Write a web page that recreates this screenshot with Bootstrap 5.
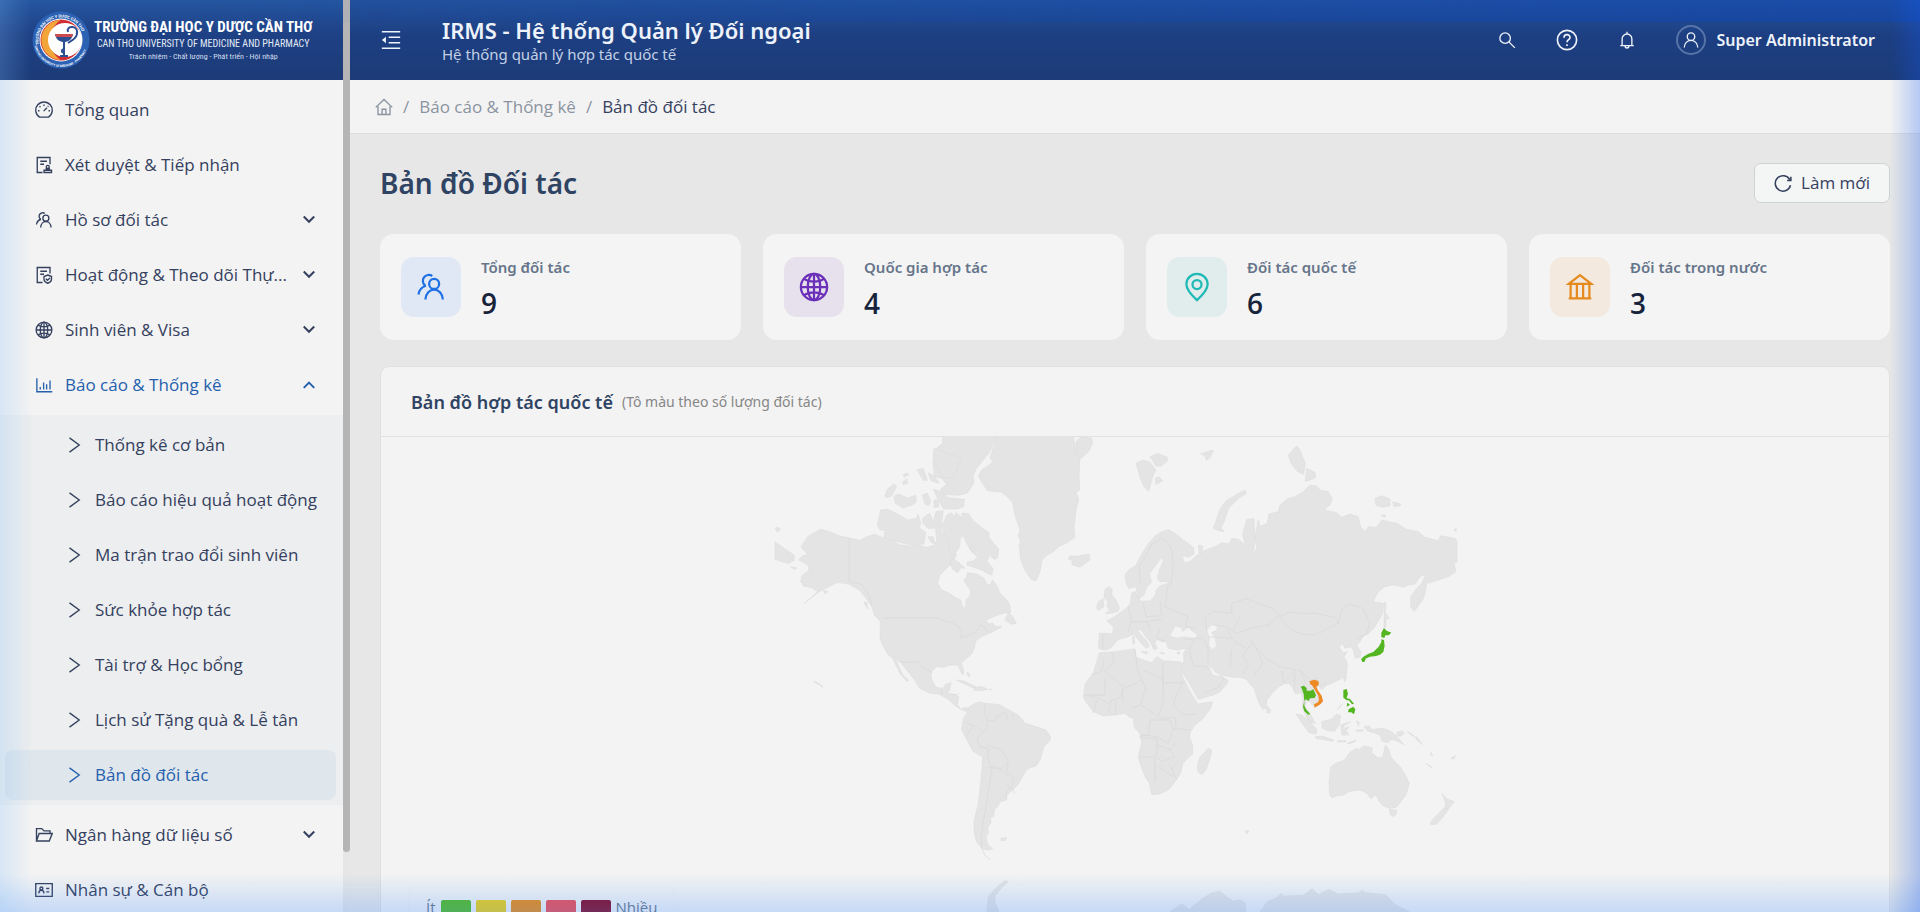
<!DOCTYPE html>
<html lang="vi">
<head>
<meta charset="utf-8">
<meta name="viewport" content="width=device-width, initial-scale=1">
<title>IRMS - Bản đồ Đối tác</title>
<link href="https://cdn.jsdelivr.net/npm/bootstrap@5.3.0/dist/css/bootstrap.min.css" rel="stylesheet">
<style>
:root{--ink:#34405e;--accent:#2560ad;--surface:#f3f3f3}
body{font-family:"Open Sans","Noto Sans",sans-serif;font-size:17px;color:var(--ink);background:#e7e7e7;overflow:hidden}
a{color:inherit;text-decoration:none}
svg.ico{width:18px;height:18px;fill:none;stroke:currentColor;stroke-width:1.8;flex:none}
svg.ico.lg{width:22px;height:22px}
/* sidebar */
.side{width:350px;flex:none;background:var(--surface)}
.brandbar{height:80px;background:linear-gradient(#2556a0,#1e4084 45%,#1c3b77);padding-left:32px}
.brandbar .seal{width:58px;height:58px}
.brand-vi,.brand-en,.brand-motto{font-family:"Roboto Condensed","Liberation Sans Narrow","Roboto",sans-serif}
.brand-vi{font-size:15px;line-height:20px;font-weight:700}
.brand-en{font-size:10px;line-height:14px;color:#e3eaf6}
.brand-motto{font-size:8px;line-height:12px;color:#d3def0}
.side-body{width:343px}
.menu{gap:5px;padding-top:5px}
.menu a{height:50px;padding:0 27px 0 35px;gap:12px}
.menu .chev{width:14px;height:14px;stroke-width:3.4}
.menu .on{color:var(--accent)}
.submenu{background:#eceeef;padding:5px 7px 5px 5px;gap:5px}
.submenu a{padding:0 12px 0 60px;border-radius:8px;gap:12px}
.submenu a.on{background:#dfe6ec}
.track{width:7px;background:#e6e6e6}
.thumb{height:852px;background:#b5b5b5;border-radius:0 0 4px 4px}
/* top bar */
.topbar{height:80px;background:linear-gradient(#24529c,#1d3f82 45%,#1c3b77);color:#eef3fb;padding:0 45px 0 30px;gap:40px}
.topbar button{background:none;border:0;color:inherit;padding:0;display:flex}
.topbar-tools{gap:40px}
.topbar,h1,.stat-label,.map-head{font-family:"Noto Sans","Open Sans",sans-serif}
.app-name{font-size:22px;line-height:28px;font-weight:600}
.app-sub{font-size:15px;line-height:20px;color:#c3d0e6}
.user-link{font-size:16px;font-weight:600;gap:10px}
.avatar-ring{width:30px;height:30px;border:2px solid #5674a8;border-radius:50%}
.crumbs{height:54px;background:var(--surface);border-bottom:1px solid #dedede;padding-left:25px;gap:10px;color:#8b93a1}
.crumbs .here{color:var(--ink)}
.page{padding:29px 30px 0 30px}
h1{font-size:28px;line-height:40px;font-weight:600;color:#2f4363}
.btn-reload{height:40px;background:#f4f5f5;border:1px solid #cfd2d5;border-radius:7px;padding:0 19px;gap:9px;color:var(--ink);font-size:17px}
.stats{gap:22px;margin-top:31px}
.stat{height:106px;border-radius:14px;background:#f4f4f4;padding:23px 21px;gap:20px;flex:1 1 0}
.tile{width:60px;height:60px;border-radius:13px;display:flex;align-items:center;justify-content:center}
.tile svg.ico{width:30px;height:30px}
.tile-blue{background:#dfe8f4;color:#1f70e4}
.tile-violet{background:#e6e1ed;color:#6b2fb8}
.tile-teal{background:#e0edec;color:#1fb9b6}
.tile-amber{background:#f3e9df;color:#e58a1f}
.stat-label{font-size:15px;line-height:20px;font-weight:600;color:#66758a}
.stat-num{font-size:28px;line-height:40px;font-weight:600;color:#16233b;margin-top:6px}
.map-card{margin-top:26px;background:var(--surface);border:1px solid #e0e0e0;border-radius:9px}
.map-head{height:70px;border-bottom:1px solid #e2e2e2;padding:0 30px;gap:9px}
.map-head h2{font-size:18px;line-height:24px;font-weight:600;color:#2f4363}
.map-head span{font-size:14px;color:#868686}
.map-area{height:520px}
.land{fill:#e4e4e4;stroke:#dbdbdb;stroke-width:1.5;stroke-linejoin:round}
.seas{fill:#f3f3f3;stroke:#dcdcdc;stroke-width:1.5}
.borders{fill:none;stroke:#d8d8d8;stroke-width:2}
.legend-box{left:27px;bottom:30px;height:40px;padding:0 17px;gap:5px;border:1px solid #f0f0f0;border-radius:6px;font-size:15px;color:#66758a}
.swatch{width:30px;height:14px;border-radius:2px}
.sw-1{background:#53bb1f}.sw-2{background:#eecf13}.sw-3{background:#ed8a10}.sw-4{background:#f04c50}.sw-5{background:#850820}
/* soft blue frame round the window */
.glow{inset:0;z-index:10;pointer-events:none;background:
linear-gradient(to right,rgba(130,190,250,.24),rgba(130,190,250,0) 32px),
linear-gradient(to left,rgba(20,90,245,.28),rgba(20,90,245,0) 30px),
linear-gradient(to top,rgba(70,145,255,.26),rgba(70,145,255,0) 38px),
linear-gradient(to left,rgba(10,70,190,.4),rgba(10,70,190,0) 90%) top/100% 22px no-repeat}
</style>
</head>
<body>
<svg class="d-none">
<symbol id="i-dash" viewBox="0 0 24 24"><path d="M6 21.5a11 11 0 1 1 12 0z"/><path d="M11.500 13.500 16 9M4 13h2M18 13h2M12 4.500v2M6 7l1.300 1.300M17.800 6.800l-.8.800"/></symbol>
<symbol id="i-audit" viewBox="0 0 24 24"><path d="M10 22H3V2h17v9M7 7h9M7 11h5M12 22h10v-3H12zM15 19v-2h4v2"/><circle cx="17" cy="14.500" r="2"/></symbol>
<symbol id="i-team" viewBox="0 0 24 24"><circle cx="14.500" cy="9.500" r="4"/><path d="M7.500 22c.3-5 3.500-8 7-8s6.700 3 7 8M13 3.200A4.500 4.500 0 1 0 7.500 11M8 11c-3.500 1-5.500 3.500-6 7"/></symbol>
<symbol id="i-shield" viewBox="0 0 24 24"><path d="M10 22H3V2h17v8M7 7h9M7 11h5M17 12l5 2v4c0 2.500-2.500 4-5 5-2.500-1-5-2.500-5-5v-4zM14.500 17l2 2 3.500-3"/></symbol>
<symbol id="i-globe" viewBox="0 0 24 24"><circle cx="12" cy="12" r="10.500"/><ellipse cx="12" cy="12" rx="5" ry="10.500"/><path d="M12 1.500v21M1.500 12h21M4 5.500c4.500 3 11.500 3 16 0M4 18.500c4.500-3 11.500-3 16 0"/></symbol>
<symbol id="i-chart" viewBox="0 0 24 24"><path d="M2.500 3v18H23M7 14.500V18M11.500 8.500V18M15.500 11v7M20 6v12"/></symbol>
<symbol id="i-folder" viewBox="0 0 24 24"><path d="M2 20V3.500h7l3 3h8V10M2 20 5.500 10H23l-4 10z"/></symbol>
<symbol id="i-id" viewBox="0 0 24 24"><path d="M1 3.500h22v17H1zM5 16.500c.3-5.500 6.700-5.500 7 0M15 10h4M15 14.500h4"/><circle cx="8.500" cy="10" r="2"/></symbol>
<symbol id="i-down" viewBox="0 0 24 24"><path d="m3 6 9 9 9-9"/></symbol>
<symbol id="i-up" viewBox="0 0 24 24"><path d="m3 17 9-9 9 9"/></symbol>
<symbol id="i-right" viewBox="0 0 24 24"><path d="M6 2.500 19 12 6 21.500"/></symbol>
<symbol id="i-user" viewBox="0 0 24 24"><circle cx="12" cy="7.500" r="5"/><path d="M3 22c.5-6 4.500-9.500 9-9.500s8.500 3.500 9 9.500"/></symbol>
</svg>

<div class="d-flex vh-100">
<aside class="side d-flex">
 <div class="side-body">
  <div class="brandbar d-flex align-items-center gap-1 text-white">
   <svg class="seal flex-shrink-0" viewBox="0 0 58 58">
    <defs><path id="arcTop" d="M7 33.700A22.500 22.500 0 1 1 51 33.700"/><path id="arcBot" d="M2.700 35A27 27 0 0 0 55.300 35"/></defs>
    <circle cx="29" cy="29" r="28.500" fill="#2c62b4"/>
    <circle cx="29" cy="29" r="21.500" fill="#fff"/>
    <circle cx="29" cy="29" r="20.500" fill="#cf2f35"/>
    <path d="M25 10.500a19 19 0 0 0 0 37 25 25 0 0 1 0-37z" fill="#f2a63a" stroke="#f2a63a" stroke-width="2"/>
    <circle cx="33" cy="29" r="17" fill="#fff"/>
    <path d="M23 23h18c-1 6-5 8-9 8s-8-2-9-8z" fill="#2c4f93"/><path d="M23 23h18l-1 3H24z" fill="#cb4a4f"/>
    <path d="M32 31v13M28 45h8M32 38c-3 1-3 3 0 4M36 21c-2-6 8-7 9-1 1 6-4 9-9 12" fill="none" stroke="#2c4f93" stroke-width="2"/>
    <g fill="#fff" font-family="Roboto,sans-serif" font-weight="700"><text font-size="4"><textPath href="#arcTop">TRƯỜNG ĐẠI HỌC Y DƯỢC CẦN THƠ</textPath></text>
    <text font-size="3"><textPath href="#arcBot">CANTHO UNIVERSITY OF MEDICINE - PHARMACY</textPath></text></g>
   </svg>
   <div class="text-center text-nowrap">
    <div class="brand-vi">TRƯỜNG ĐẠI HỌC Y DƯỢC CẦN THƠ</div>
    <div class="brand-en">CAN THO UNIVERSITY OF MEDICINE AND PHARMACY</div>
    <div class="brand-motto">Trách nhiệm - Chất lượng - Phát triển - Hội nhập</div>
   </div>
  </div>
  <nav class="menu d-flex flex-column">
   <a href="#" class="d-flex align-items-center"><svg class="ico"><use href="#i-dash"/></svg><span>Tổng quan</span></a>
   <a href="#" class="d-flex align-items-center"><svg class="ico"><use href="#i-audit"/></svg><span>Xét duyệt &amp; Tiếp nhận</span></a>
   <a href="#" class="d-flex align-items-center"><svg class="ico"><use href="#i-team"/></svg><span class="flex-fill">Hồ sơ đối tác</span><svg class="ico chev"><use href="#i-down"/></svg></a>
   <a href="#" class="d-flex align-items-center"><svg class="ico"><use href="#i-shield"/></svg><span class="flex-fill text-nowrap">Hoạt động &amp; Theo dõi Thự...</span><svg class="ico chev"><use href="#i-down"/></svg></a>
   <a href="#" class="d-flex align-items-center"><svg class="ico"><use href="#i-globe"/></svg><span class="flex-fill">Sinh viên &amp; Visa</span><svg class="ico chev"><use href="#i-down"/></svg></a>
   <a href="#" class="d-flex align-items-center on"><svg class="ico"><use href="#i-chart"/></svg><span class="flex-fill">Báo cáo &amp; Thống kê</span><svg class="ico chev"><use href="#i-up"/></svg></a>
   <div class="submenu d-flex flex-column">
    <a href="#" class="d-flex align-items-center"><svg class="ico"><use href="#i-right"/></svg><span>Thống kê cơ bản</span></a>
    <a href="#" class="d-flex align-items-center"><svg class="ico"><use href="#i-right"/></svg><span class="text-nowrap">Báo cáo hiệu quả hoạt động</span></a>
    <a href="#" class="d-flex align-items-center"><svg class="ico"><use href="#i-right"/></svg><span>Ma trận trao đổi sinh viên</span></a>
    <a href="#" class="d-flex align-items-center"><svg class="ico"><use href="#i-right"/></svg><span>Sức khỏe hợp tác</span></a>
    <a href="#" class="d-flex align-items-center"><svg class="ico"><use href="#i-right"/></svg><span>Tài trợ &amp; Học bổng</span></a>
    <a href="#" class="d-flex align-items-center"><svg class="ico"><use href="#i-right"/></svg><span>Lịch sử Tặng quà &amp; Lễ tân</span></a>
    <a href="#" class="d-flex align-items-center on" aria-current="page"><svg class="ico"><use href="#i-right"/></svg><span>Bản đồ đối tác</span></a>
   </div>
   <a href="#" class="d-flex align-items-center"><svg class="ico"><use href="#i-folder"/></svg><span class="flex-fill">Ngân hàng dữ liệu số</span><svg class="ico chev"><use href="#i-down"/></svg></a>
   <a href="#" class="d-flex align-items-center"><svg class="ico"><use href="#i-id"/></svg><span>Nhân sự &amp; Cán bộ</span></a>
  </nav>
 </div>
 <div class="track"><div class="thumb"></div></div>
</aside>

<div class="flex-fill overflow-hidden">
 <header class="topbar d-flex align-items-center">
  <button type="button" aria-label="Thu gọn menu"><svg class="ico lg" viewBox="0 0 24 24"><path d="M2 3h20M9.500 9h12.500M9.500 15h12.500M2 21h20" stroke-width="1.900"/><path d="M2 12l4.500-3.500v7z" fill="currentColor" stroke="none"/></svg></button>
  <div class="flex-fill"><div class="app-name">IRMS - Hệ thống Quản lý Đối ngoại</div><div class="app-sub">Hệ thống quản lý hợp tác quốc tế</div></div>
  <div class="topbar-tools d-flex align-items-center">
   <button type="button" aria-label="Tìm kiếm"><svg class="ico" viewBox="0 0 24 24"><circle cx="9.500" cy="9.500" r="7"/><path d="m14.500 14.500 8 8"/></svg></button>
   <button type="button" aria-label="Trợ giúp"><svg class="ico lg" viewBox="0 0 24 24"><circle cx="12" cy="12" r="10.500"/><path d="M8.700 9.500c0-4.500 6.600-4.500 6.600-.3 0 2.500-3.300 2.500-3.300 5.300M12 16.500v2"/></svg></button>
   <button type="button" aria-label="Thông báo"><svg class="ico" viewBox="0 0 24 24"><path d="M5.500 19.500V10.500a6.500 6.500 0 0 1 13 0v9M3 19.500h18M12 1v3M9.500 20c0 3.500 5 3.500 5 0"/></svg></button>
   <a href="#" class="user-link d-flex align-items-center text-nowrap"><span class="avatar-ring d-flex align-items-center justify-content-center"><svg class="ico"><use href="#i-user"/></svg></span><span>Super Administrator</span></a>
  </div>
 </header>
 <nav class="crumbs d-flex align-items-center">
  <a href="#" aria-label="Trang chủ" class="d-flex"><svg class="ico" viewBox="0 0 24 24"><path d="M1 12.500 12 2l11 10.500M4 11v11h16V11M9.500 22v-7h5v7"/></svg></a><span>/</span><a href="#">Báo cáo &amp; Thống kê</a><span>/</span><span class="here">Bản đồ đối tác</span>
 </nav>
 <main class="page">
  <div class="d-flex justify-content-between align-items-center">
   <h1 class="m-0">Bản đồ Đối tác</h1>
   <button type="button" class="btn btn-reload d-flex align-items-center"><svg class="ico" viewBox="0 0 24 24"><path d="M21 7.500A10.300 10.300 0 1 0 22 15M22.500 3.500v5h-5" stroke-width="2"/></svg>Làm mới</button>
  </div>
  <section class="stats d-flex">
   <div class="stat d-flex"><div class="tile tile-blue"><svg class="ico"><use href="#i-team"/></svg></div><div><div class="stat-label">Tổng đối tác</div><div class="stat-num">9</div></div></div>
   <div class="stat d-flex"><div class="tile tile-violet"><svg class="ico"><use href="#i-globe"/></svg></div><div><div class="stat-label">Quốc gia hợp tác</div><div class="stat-num">4</div></div></div>
   <div class="stat d-flex"><div class="tile tile-teal"><svg class="ico" viewBox="0 0 24 24"><path d="M12 22.500C6.500 17.500 3.500 13.500 3.500 9.800a8.500 8.300 0 0 1 17 0C20.500 13.500 17.500 17.500 12 22.500z"/><circle cx="12" cy="10" r="3.600"/></svg></div><div><div class="stat-label">Đối tác quốc tế</div><div class="stat-num">6</div></div></div>
   <div class="stat d-flex"><div class="tile tile-amber"><svg class="ico" viewBox="0 0 24 24"><path d="M3 9.500h18L12 2.500zM3 21h18M4.500 9.500V21M9.500 9.500V21M14.500 9.500V21M19.500 9.500V21"/></svg></div><div><div class="stat-label">Đối tác trong nước</div><div class="stat-num">3</div></div></div>
  </section>
  <section class="map-card">
   <div class="map-head d-flex align-items-center"><h2 class="m-0">Bản đồ hợp tác quốc tế</h2><span>(Tô màu theo số lượng đối tác)</span></div>
   <div class="map-area position-relative overflow-hidden">
    <svg class="w-100 h-100 d-block" viewBox="0 0 1508 520" role="img" aria-label="Bản đồ thế giới">
     <g transform="translate(379 -7) scale(.33333)">
      <!-- Americas, Greenland, Iceland -->
      <g class="land">
       <path d="M182 297l28 9 30 12 28 6 32 7 20-11 25-7 20 9 30 8 25 15 30 3 25-3 25 7 25-7 5-15-3-30-7-25 8-30 22-3-5 33 0 30 15 15 10 25 8 15 12 15-15 25-20 20-15 15-7 25 12 20 20 8 25 17 12 5 6 20 8 5 2-25 12-12 2-18-12-15-8-15 8-10 2-12 28 4 22 13 8 17 10 3 8-15 14 20 8 20 25 25 5 15 2 18-22 2-30 10-22 10 8 12 12-4 5 10 23 2-33 18-25 10-20 14-5 23-8 17-22 18-9 10 6 15 1 20-8-7-9-23-26 1-15 6-25-2-15 18 2 22 13 22 20 3 10-13 15-4-3 17-7 17 25 3 8 5-3 25 10 13 13-6 12 4-10 8-10-3-20-12-25-22-25-14-30-4-30-15-15-25-20-25-20-25-17-15 22 50 18 16-4 5-22-24-22-46-15-12-15-28-8-20 1-50-18-20-7-25-18-25-20-25-30-17-35-6-35 18-20 10-45 35 40-35-15-10-30-8-5-27 25-20-5-15-27-15 12-13 15-2-20-25 20-30z"/>
       <path d="M45 336l58 40 0 15-18 10-40-13zM46 295l8-4 8 8-10 8zM92 410l18 4-6 5zM120 452l8 2-2 5zM190 482l14 2-8 8zM312 516l8 1 4 20-9-13z"/>
       <path d="M548 19h164l-25 50-25 30-15 20-8 20 3 20-20 30-25 7-45-3-10-15 18-15-15-18-22-5-1-15-3-25 4-40 25-20z"/>
       <path d="M522 55l-2 40 15 20 8 25 20 6 20-8 20-55-35-10z"/>
       <path d="M362 240l22-2 35 18 25 14 25-5 5-12 8 22-3 20 18 12-5 35-25 2-30-2-35-10-30-10 3-22-15 0-8-15z"/>
       <path d="M374 198l8-20 20-17 8 8-15 28-13 6zM402 198l15-6 25 12 25-8 2 20-10 8-20 6-8 5-25-15zM428 155l12-8 4 12-14 5zM430 133l12-4 4 6-14 6zM470 118l20-2 12 35-12 0zM505 128l18 10 15 22-25-8zM487 195l15-5 10 22-5 15-12-5zM522 210l12 0 2 20-14 3zM520 178l28 7 15 18 50 5-2 22-20 7-40 0-15-25zM488 265l20-15 8 15 6 30-18 0-15-15zM504 320l15 0 6 22-12-5z"/>
       <path d="M560 255l15-7 8 15 5-15 18 15 0-14 20 2 12 20 25 20 25 18-2 12 12 15 18 22-3 25-10 5-15-13-7 20 18 20-3 20-15-5-15-10-45-15 0-8 20-5 12-10-22-22-12-22-10-22-8 10-2 25-22 30-8-20-5-30-12-20-5-25zM578 385l22 15 15 15-12-2-10 15-15-10-8-20zM630 345l12 2 2 15-8 6zM735 570l10-20 12 8 12 22-15 3z"/>
       <path d="M712 19h228l8 50 12 10-3 60 3 40-12 8 8 20-8 35-6 50 2 20 0 10-25 18-20 8-20 18-18 10-15 15-5 30-12 32-15-4-20-30-12-30-5-45 5-8-8-20 6-15-15-45-8-40-20-20-14-10-40-3-12-18-8-12-8-15 10-18 15-10 18-14-8-14z"/>
       <path d="M948 35l15-14 30 3 6 12-12 28-25 22-14-12zM930 378l25 0 33-6 2 18-30 22-25-8 2-12-12-6z"/>
       <path d="M588 750l25 3 35 18-10 2-30-14zM642 773l22-4 20 9-20 4-22-1zM688 777l8 1-6 3zM620 727l10 5-2 10-6-7zM163 754l10 4 10 6 6 8-3-1-6-6-17-8zM722 1225l18-2-4 8-12 1z"/>
       <path d="M627 832l18-12 20-5 5 4 50 5 25 15 28 15 12 12 8 12 40 14 25 8 14 20-2 12-18 18-10 35-12 22-28 10-12 18-15 28-20 20-15 12 0 15-20 5-5 12-12 12-2 20-10 6 2 12-10 18 3 12-8 15 5 20 15 15-15 3-15-4-18-20-8-30 0-35 12-45 6-50 6-60 2-35-30-18-18-35-15-28 5-35 10-15z"/>
      </g>
      <path class="borders" d="M268 327v128l36 8 22 30 10 35M370 564h162l20 8 25 6 22 15 6 12-2 18 20-6 25-12 15-20 12 6 6 15M420 694l35 4 15-4 20 20 28 14M568 790l20 5 8-6M545 780l0 14M675 822l-2 28 10 20-5 25-12 15-15 15 8 25 25 5 0 30 12 28-4 30-10 60-8 50-10 60 0 40 12 25 15 10M683 870l20 5 10-18 22-10M738 845l5 28M757 848l5 25M618 878l22 8 25 15M640 886l-20 30M680 945l45 15 20 35-20 20-40-2M745 995l-5 30 20 15-2 25-18 20-2 20M740 1065l20 15 4 10M686 1013l20-5 40 30"/>
      <!-- Europe, Asia, Africa, Oceania -->
      <g transform="translate(900 0)">
       <g class="land">
        <path d="M196 432L208 418 226 408 238 385 262 345 285 318 305 305 325 299 345 310 370 330 400 352 402 372 385 382 366 375 374 400 392 393 408 378 432 362 470 348 485 338 508 342 515 325 535 328 555 345 548 312 560 268 582 266 585 330 580 375 590 355 585 320 595 270 600 290 622 280 626 252 655 245 660 225 685 205 705 200 730 185 750 165 770 168 780 180 805 185 817 205 812 222 792 240 830 248 845 262 870 252 895 260 902 290 915 305 925 290 950 292 965 270 985 275 1010 280 1040 298 1075 305 1095 322 1135 332 1142 317 1185 325 1191 335 1191 395 1182 400 1188 425 1165 440 1120 455 1100 460 1095 490 1088 510 1062 545 1052 530 1052 500 1068 478 1085 460 1098 432 1080 440 1065 462 1045 465 1030 472 1000 465 975 470 955 485 940 515 958 518 970 520 968 550 945 590 925 612 910 618 900 635 890 645 903 665 900 682 886 685 880 660 872 650 855 655 848 640 838 652 850 668 862 665 852 680 862 700 860 730 845 745 820 758 795 768 780 770 772 768 768 785 784 800 788 815 770 830 760 828 750 815 742 812 735 830 748 850 758 880 748 878 735 850 728 835 728 800 722 785 715 792 705 790 695 768 685 760 670 762 655 772 640 785 620 812 618 835 608 838 595 815 582 775 572 765 560 748 540 742 520 742 500 738 485 735 470 735 490 742 505 752 498 765 480 785 460 795 415 808 405 790 385 755 362 720 372 690 370 670 380 655 350 660 325 655 318 635 305 635 290 628 285 640 292 655 282 660 270 635 255 618 245 600 232 598 240 612 262 635 268 650 258 655 235 630 222 612 200 622 185 625 170 632 162 645 145 658 130 660 115 655 118 610 140 610 158 612 160 590 140 572 150 568 160 562 175 552 195 538 210 522 215 490 226 484 236 508 228 470 205 475 196 450Z"/>
        <path d="M135 478l12-8 10 8-2 15 15 20 8 20-2 10-18 6-22 2 12-12-8-10 4-14-12-12zM115 515l15-9 2 25-18 10-4-10zM245 665l18 0-4 8zM299 667l16 3-10 2zM218 620l4-2 2 24-6-2zM350 668l10-2-3 8z"/>
        <path d="M118 668L158 666 225 656 228 680 235 685 275 698 290 680 312 692 362 696 368 705 362 722 370 745 385 775 400 800 412 822 458 815 452 835 430 865 405 885 392 905 388 920 398 945 398 972 378 990 368 1002 362 1030 345 1055 325 1080 300 1092 275 1094 268 1060 255 1040 235 985 238 965 245 940 240 912 222 890 220 865 208 862 195 850 165 855 130 858 100 845 75 812 70 800 76 760 100 728 112 690Z"/>
        <path d="M445 955l10 5-2 15-15 45-12 14-12-8-2-20 8-25zM622 828l10 12-2 8-8 1-3-9z"/>
        <path d="M228 100l20-10 20 5 20 25-10 20-12 44-15-15-12-30zM270 80l25-10 27 12 0 12-20 15-15-2zM286 145l12-4 10 12-20 10zM422 72l22-8 16-3-8 20-12 10-6-14zM685 75l25-28 10 12 16 42-5 32-18-8-20-25zM740 115l25 12 2 15-15 8-16 4zM460 295l8-22 12-35 18-25 35-22 22-11 4 10-22 15-30 28-14 40-10 20 10 12-15-2zM945 205l20-8 25 10 0 20-20 5-22-6zM998 215l25 7-3 6-18 2zM962 255l15 1-3 7zM1182 302l6-8 2 8zM415 345l14 3-4 20-8 2zM973 515l5 5-2 25 12 22-10-2 0 25-6 3z"/>
        <path d="M812 1012l15-12 28-10 12-20 20-15 10 4 15-12 25 6-2 15 18 15 15 0 8-38 10 12 8 25 15 18 12 10 15 25 12 25-10 35-20 26-10 12-20 2-20-8-12-15-8-18-15 12-14-18-20-8-30 4-20 12-20 2-12 6-8-8-2-40zM988 1138l22 3-2 12-8 7-10-7z"/>
        <path d="M1146 1090l12 15 25 10-18 22-8 1-2-22zM1152 1133l14 4-12 18-24 28-18 0 2-10zM1172 985l14-8-4 10zM1098 1000l16 10 0 4zM555 1202l12 1-6 9z"/>
        <path d="M708 853l18 2 22 20 22 22-2 16-22-6-18-25zM765 920l22-2 35 12-2 4-50-8zM738 855l10-5 10 15 8 16-10-5-14-12zM785 875l30-8 15-15 12 5-2 12-2 15-14 20-20-2-18-8zM842 885l30-10-22 14 5 6 12-5-8 12 8 14-8-2-6-10 2 14-10-5zM832 932h25l2 3-26 1zM862 940l25-10-2 5-18 6zM890 872l8 5-4 12zM888 900l22 0 0 3-20 1zM912 890l15-3 10 12 28-5 25 8 12 10 15 14 15 18-28-14-15 0-4 8-18-4-8-20-25-8-12-4zM1008 908l18-6 8 8-14 9-12-4 14-2zM1042 905l15 8 12 12-12-8zM1070 920l18 24-18-14zM1112 966l6 10-4 2zM832 837l15-16-10 14zM850 745l6-12 4 5-6 18zM780 765l16-6 0 8-8 12-8-4z"/>
       </g>
       <path class="seas" d="M330 618L345 588 363 592 368 605 385 592 395 602 413 615 405 625 375 620 350 624ZM440 600l14-15 18 2-2 14-15 6 10 18 5 22-12 12-12-12 2-22zM303 384L310 392 298 420 292 445 300 455 328 455 325 460 300 468 288 480 286 495 270 512 245 514 236 508 252 495 262 470 275 455 268 432ZM446 708l8 3 12 15 20 10-12 3-16-4z"/>
       <path class="borders" d="M305 325l-28 15-20 40-20 30 4 50M305 325l20 15 12 25 2 50-6 50M325 460l-10 70 70 30-8 30 28 4M515 520l45-14 40 16 38 12 20 20M515 520l0 30-60-6-20 20 5 40M658 554l-30 30-50 10-50 16-30-20-35-5M660 560l30-14 35 4 40 0 60 12 10 18-32 15-35 20-45-3-40-20-23-30M835 580l12-45 20-12 42 12 20 42-8 32-30 18M570 625l20 30 28 30 40 25 65 12 28 30 24-8M500 600l30 40 30 15M515 660l-5 50M575 640l-28 40 20 22-20 30M580 740l28-40-20-45M665 720l6 38 30-30M705 720l-2 50M722 725l14 30-12 30M370 630l60-6 14 30 0 45M400 632l-12 30 12 45 40 3 5 10M430 790l50-20 12-30M445 620l70 5M540 560l-20 40M205 530l8 40-8 35M250 520l8 40 40-2M213 575l50 0 45-8M300 510l4 44M270 600l-10-30M300 595l-10 30 25 8"/>
       <path class="borders" d="M132 688l-6 35-30 10M155 665l8 30-30 28 60 50M225 660l8 60 14 30-60 28 2 40M308 698v60h62M250 720l60 28v70l-15 40M135 745v50h-50M190 775l-10 28-30 10M247 750l10 25-15 50-30 10M75 795l40 10 30 15M370 755l-20 40-10 30 30 30 40-2M245 825l55 40 40-2M100 850l10-40M145 850l8-40M165 855l4-45M270 870l-5 45-28 5M270 870h60l10 30-15 40-35-20-45-5M240 925h50v55l-50 2M292 945l40 15 15-20M340 895l50 5M325 955l20 25-40 15-15-15M285 985v70M295 1010l45 30M350 1000l-15 20M350 1050l-20-45M128 615v40M345 860l4 40"/>
       <g fill="#53b51f"><path d="M722 770l10-3 8 7 0 8 12 0 8-4 8 18-4 8-14 1-4 8-8-5-5 6 0 13 6 12 12 13-6 2-12-10-4-14 4-18-2-20-5-15zM964 608l8-14 8 8 14 6-8 8-10 0-3 8-9-3zM964 628l8 2 2 18-4 18-10 8-12 4-18 2-14 6-10 8 2-12 16-10 16-6 16-16 8-14zM903 686l12-4 2 6-4 8-6 0zM850 780l10-3 4 14-4 12 8 8-8 0-10-8zM862 805l8 2 12 14-6 2zM862 818l8 6-10 6zM866 838l14-8 6 8-4 15-8-6-10 0z"/></g>
       <path fill="#ed8a26" d="M748 754l15-5 12 4 2 10-8 8 6 12 10 14 4 16-8 10-10 6-7 4-2-10 12-6 3-8-2-12-12-20-6-10-6-4z"/>
      </g>
      <!-- Antarctica -->
      <g class="land" transform="translate(600 1296)"><path d="M80 155l5-50 20-25 30-25 10 4-20 18-20 25 0 20 20 45zM630 150l35-25 25 20 5-10 40-30 20-12 25-6 25 22 15 8 20-4 15 10 3 30h40l25-35 30-12 10-12 8 8 60-2 25-20 20 18 30-16 30 14 60-4 12-8 8 8 60 6 30 30 40 20v90H630z"/></g>
     </g>
    </svg>
    <div class="legend-box position-absolute d-flex align-items-center"><span>Ít</span><i class="swatch sw-1"></i><i class="swatch sw-2"></i><i class="swatch sw-3"></i><i class="swatch sw-4"></i><i class="swatch sw-5"></i><span>Nhiều</span></div>
   </div>
  </section>
 </main>
</div>
</div>
<div class="glow position-fixed"></div>
<script src="https://cdn.jsdelivr.net/npm/bootstrap@5.3.0/dist/js/bootstrap.bundle.min.js"></script>
</body>
</html>
